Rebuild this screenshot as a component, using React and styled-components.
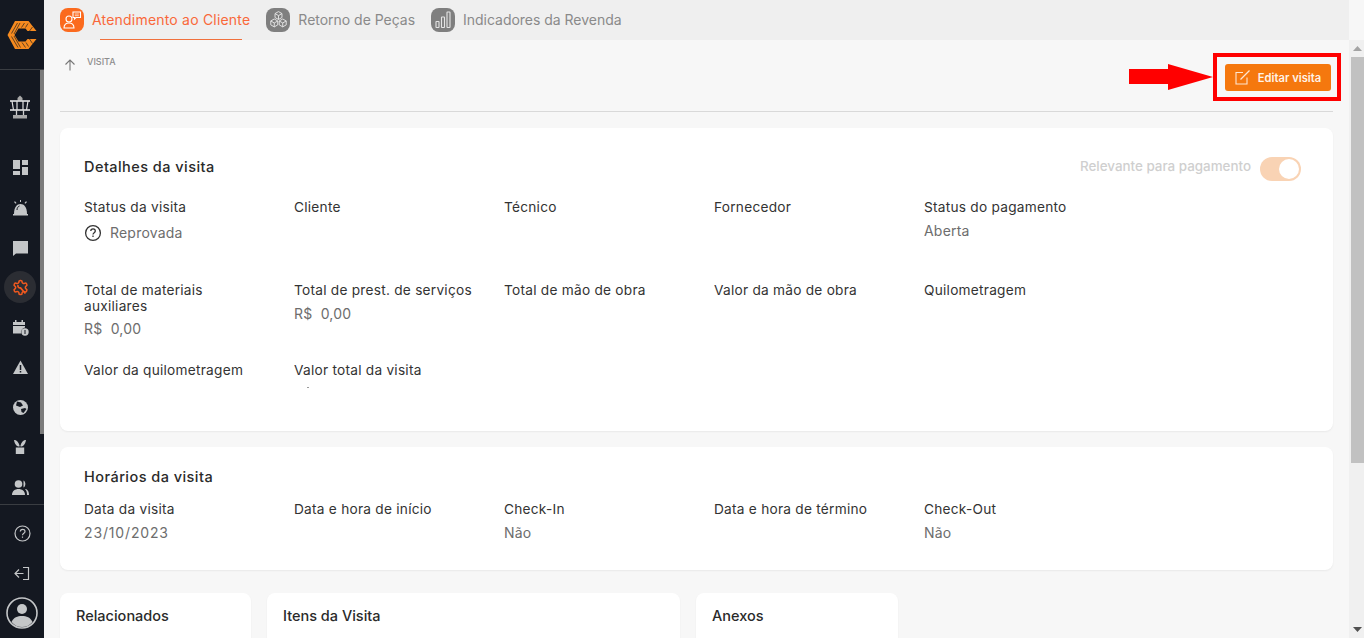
import React from "react";
import styled, { createGlobalStyle } from "styled-components";

const Global = createGlobalStyle`
  html, body { margin: 0; padding: 0; height: 100%; overflow: hidden; }
  body { font-family: Inter, "Noto Sans", sans-serif; }
  #root { height: 100%; }
`;

const Shell = styled.div`
  display: flex;
  width: 1364px;
  height: 638px;
  overflow: hidden;
  background: #f7f7f7;
`;

const Sidebar = styled.aside`
  width: 44px;
  flex: none;
  display: flex;
  flex-direction: column;
  background: #141821;
`;

const LogoBox = styled.div`
  height: 70px;
  flex: none;
  display: flex;
  align-items: center;
  justify-content: center;
  border-bottom: 1px solid #3a3d42;
  box-sizing: border-box;
`;

const NavScroll = styled.div`
  height: 435px;
  flex: none;
  display: flex;
  flex-direction: column;
  align-items: center;
  padding: 21px 4px 0 0;
  box-sizing: border-box;
  position: relative;
  border-bottom: 1px solid #3a3d42;
`;

const SideThumb = styled.div`
  position: absolute;
  top: 0;
  right: 0;
  width: 4px;
  height: 364px;
  background: #7b7b7b;
`;

const NavItem = styled.div`
  width: 32px;
  height: 32px;
  margin-bottom: ${p => p.$after ?? 8}px;
  flex: none;
  display: flex;
  align-items: center;
  justify-content: center;
  border-radius: 50%;
  background: ${p => (p.$active ? "#2b2d33" : "transparent")};
`;

const FootNav = styled.div`
  flex: 1;
  display: flex;
  flex-direction: column;
  align-items: center;
  padding-top: 12px;
  gap: 8px;
`;

const Main = styled.div`
  flex: 1;
  display: flex;
  min-width: 0;
`;

const Column = styled.div`
  flex: 1;
  min-width: 0;
  display: flex;
  flex-direction: column;
`;

const TabBar = styled.nav`
  height: 40px;
  flex: none;
  box-sizing: border-box;
  background: #efefef;
  display: flex;
  align-items: flex-start;
  padding-left: 16px;
`;

const Tab = styled.div`
  height: 40px;
  box-sizing: border-box;
  display: flex;
  align-items: center;
  gap: 8px;
  margin-right: 16px;
  padding-bottom: 1px;
  position: relative;
  font-size: 14px;
  letter-spacing: ${p => (p.$active ? "0.2px" : "-0.02px")};
  color: ${p => (p.$active ? "#f9683a" : "#8a8a8a")};
  ${p => p.$active && `
    &::after {
      content: "";
      position: absolute;
      left: 40px;
      bottom: 0;
      width: 142px;
      height: 1px;
      background: #f0703c;
    }
  `}
`;

const TabIcon = styled.span`
  width: 24px;
  height: 24px;
  border-radius: 8px;
  display: flex;
  align-items: center;
  justify-content: center;
  background: ${p => (p.$active ? "#fb6a1e" : "#7f7f7f")};
`;

const Content = styled.main`
  flex: 1;
  min-height: 0;
  padding: 0 16px;
  overflow: hidden;
`;

const PageHead = styled.header`
  height: 72px;
  box-sizing: border-box;
  border-bottom: 1px solid #d9d9d9;
  display: flex;
  justify-content: space-between;
  align-items: flex-start;
  margin-bottom: 16px;
`;

const Crumb = styled.div`
  display: flex;
  align-items: flex-start;
  gap: 11px;
  padding: 16px 0 0 4px;
  font-size: 9px;
  font-weight: 500;
  color: #8d8d8d;
  & > svg { margin-top: 3px; }
`;

const ActionArea = styled.div`
  display: flex;
  align-items: center;
  margin: 13px -8px 0 0;
`;

const Highlight = styled.div`
  width: 128px;
  height: 48px;
  box-sizing: border-box;
  border: 4px solid #ff0000;
  padding: 1px 6px 0 0;
  display: flex;
  align-items: center;
  justify-content: flex-end;
`;

const EditButton = styled.button`
  width: 106px;
  height: 27px;
  padding: 0;
  border: 0;
  border-radius: 3px;
  background: #f5780e;
  color: #fff3e8;
  font: 600 11.2px Inter, sans-serif;
  display: flex;
  align-items: center;
  justify-content: center;
  gap: 8px;
`;

const Card = styled.section`
  background: #fff;
  border-radius: 8px;
  box-shadow: 0 1px 2px rgba(0, 0, 0, 0.06);
  box-sizing: border-box;
  padding: ${p => p.$pad};
  height: ${p => p.$h}px;
  margin-bottom: 16px;
`;

const CardHead = styled.div`
  display: flex;
  justify-content: space-between;
  align-items: flex-start;
`;

const CardTitle = styled.h2`
  margin: 0;
  font-size: 14.5px;
  line-height: 20px;
  font-weight: 500;
  letter-spacing: ${p => (p.$wide ? "0.45px" : "0")};
  color: #2a2a2a;
`;

const RelevantRow = styled.div`
  display: flex;
  align-items: flex-start;
  gap: 9px;
  font-size: 13.4px;
  line-height: 18px;
  font-weight: 500;
  color: #cfcfcf;
  margin-right: 8px;
`;

const SwitchTrack = styled.span`
  width: 41px;
  height: 24px;
  border-radius: 12px;
  background: #f9d3b4;
  position: relative;
`;

const SwitchThumb = styled.span`
  position: absolute;
  top: 2px;
  right: 2px;
  width: 20px;
  height: 20px;
  border-radius: 50%;
  background: #fff;
`;

const FieldGrid = styled.div`
  display: grid;
  grid-template-columns: repeat(5, 210px);
  grid-template-rows: ${p => p.$rows};
  margin-top: ${p => p.$top}px;
`;

const Field = styled.div`
  padding-right: 26px;
  overflow: hidden;
`;

const Label = styled.div`
  font-size: 13.7px;
  line-height: 16px;
  letter-spacing: 0.24px;
  color: #333;
`;

const Value = styled.div`
  margin-top: ${p => p.$top ?? 7}px;
  font-size: 14px;
  line-height: 18px;
  letter-spacing: ${p => (p.$digits ? "0.85px" : "0.2px")};
  color: #6d6d6d;
  display: flex;
  align-items: center;
  gap: 8px;
`;

const ClippedValue = styled.div`
  height: 1px;
  margin: 9px 0 0 13px;
  width: 2px;
  background: #9a9a9a;
`;

const BottomRow = styled.div`
  display: flex;
  gap: 16px;
  margin-top: 23px;
`;

const SmallCard = styled.section`
  width: ${p => p.$w}px;
  height: 80px;
  background: #fff;
  border-radius: 8px;
  box-shadow: 0 1px 2px rgba(0, 0, 0, 0.06);
  padding: 13px 16px;
  box-sizing: border-box;
`;

const Scrollbar = styled.div`
  width: 15px;
  flex: none;
  background: #f0f0f0;
  display: flex;
  flex-direction: column;
  align-items: flex-end;
  margin-top: 40px;
`;

const ScrollArrow = styled.div`
  height: 17px;
  width: 13px;
  display: flex;
  align-items: center;
  justify-content: center;
  flex: none;
`;

const ScrollThumb = styled.div`
  width: 13px;
  height: 406px;
  background: #c1c1c1;
  flex: none;
`;

const ScrollSpace = styled.div`
  flex: 1;
`;

const Glyph = ({ children, size = 18, vb = 24 }) => (
  <svg width={size} height={size} viewBox={`0 0 ${vb} ${vb}`} fill="#c4c6c8">{children}</svg>
);

const Logo = () => (
  <svg width="30" height="30" viewBox="0 0 30 30" fill="none">
    <path d="M8 1h13.500L29.500 11H20.500L18.500 8.500H11.500L7.500 15l4 6.500h7l2-2.500h9l-8 10H8L.5 15z" fill="#f58a1f" />
    <path d="M4.500 13.500L10.500 3M7 14l6-11M14.500 7.500l3-4.500M18.500 7.500l2.500-4M22.500 11l3-4M4.500 16.500l6.500 11M7 16l6.500 11.500M15 22.500l3.500 5M19 22.500l2.500 4M22.500 19l3 4.500" stroke="#141821" strokeWidth=".65" />
  </svg>
);

const Tower = () => (
  <svg width="20" height="24" viewBox="0 0 20 24" fill="none">
    <path d="M7.500 5.500V3L10 .5 12.500 3v2.500z" fill="#a8a8a8" />
    <path d="M0 6h20M0 15h20" stroke="#f0f0f0" strokeWidth="1.600" />
    <path d="M2 6l1.500 9M7 6v9M13 6v9M18 6l-1.500 9" stroke="#e0e0e0" strokeWidth="1.200" />
    <path d="M6.500 15v5M13.500 15v5" stroke="#d0d0d0" strokeWidth="1.300" />
    <rect x="3" y="20" width="14" height="3.500" fill="#a8a8a8" />
  </svg>
);

const Dash = () => (
  <Glyph size={17} vb={17}>
    <path d="M1 1h7v9H1zM10 1h6v5h-6zM10 8h6v8h-6zM1 12h7v4H1z" />
  </Glyph>
);
const Alarm = () => (
  <Glyph size={17} vb={17}>
    <path d="M2 15c0-7 3-10 6.500-10S15 8 15 15z" />
    <path d="M1 15h15v1.500H1zM8 1h1v2H8zM2 3l1-.7L4.500 4l-.8.7zM15 3l-1-.7L12.500 4l.8.7z" />
    <path d="M5 11c0-2 1-3.500 2.500-4" stroke="#141821" strokeWidth="1" fill="none" />
  </Glyph>
);
const Chat = () => (
  <Glyph size={17} vb={17}>
    <path d="M1 2h15v12.500H4L1 17z" />
  </Glyph>
);
const Gear = () => (
  <svg width="17" height="17" viewBox="0 0 24 24" fill="none" stroke="#f0591f" strokeWidth="2.200" strokeLinejoin="round">
    <path d="M12.220 2h-.44a2 2 0 0 0-2 2v.18a2 2 0 0 1-1 1.730l-.43.250a2 2 0 0 1-2 0l-.15-.08a2 2 0 0 0-2.730.730l-.22.380a2 2 0 0 0 .730 2.730l.15.100a2 2 0 0 1 1 1.720v.510a2 2 0 0 1-1 1.740l-.15.090a2 2 0 0 0-.73 2.730l.22.380a2 2 0 0 0 2.730.730l.15-.08a2 2 0 0 1 2 0l.43.250a2 2 0 0 1 1 1.730V20a2 2 0 0 0 2 2h.44a2 2 0 0 0 2-2v-.18a2 2 0 0 1 1-1.730l.43-.25a2 2 0 0 1 2 0l.15.080a2 2 0 0 0 2.730-.73l.22-.39a2 2 0 0 0-.73-2.730l-.15-.08a2 2 0 0 1-1-1.740v-.5a2 2 0 0 1 1-1.740l.15-.09a2 2 0 0 0 .73-2.730l-.22-.38a2 2 0 0 0-2.730-.73l-.15.080a2 2 0 0 1-2 0l-.43-.25a2 2 0 0 1-1-1.730V4a2 2 0 0 0-2-2z" />
    <path d="M8.500 8.500a3 3 0 0 0 3.500 4l7 8" strokeWidth="2.400" />
  </svg>
);
const CalendarCost = () => (
  <Glyph size={17} vb={17}>
    <path d="M1 3h12v3H1zM3 1h1.500v2H3zM9.500 1H11v2H9.500zM1 7h12v1.500a5 5 0 0 0-4 6H1z" />
    <circle cx="13" cy="13" r="3.700" />
    <path d="M13 11v4" stroke="#141821" strokeWidth="1" />
  </Glyph>
);
const Warn = () => (
  <Glyph size={17} vb={17}>
    <path d="M8.500 1.500L16 15H1z" />
    <path d="M8.500 6v5M8.500 12v1.500" stroke="#141821" strokeWidth="1.500" />
  </Glyph>
);
const Globe = () => (
  <Glyph size={17} vb={17}>
    <circle cx="8.500" cy="8.500" r="7.500" />
    <path d="M5 2.500l4 1 2 3-3 1.500-4-1.500zM9 10l4-1 1.500 1-3 4-2-1z" fill="#141821" />
  </Glyph>
);
const Plant = () => (
  <Glyph size={14} vb={15}>
    <path d="M3 8h9v7H3zM1 0c3 0 5 2 6 6v1C4 7 2 5 1 0zM14 0c-3 0-5 2-6 6v1c3 0 5-2 6-7z" />
  </Glyph>
);
const People = () => (
  <Glyph size={17} vb={17}>
    <circle cx="6.500" cy="5" r="3.800" />
    <path d="M0 16c0-4 3-6 6.500-6s6.500 2 6.500 6z" />
    <path d="M11.500 1.500c2.500 1 2.500 6 0 7M14 10c2 1 3 3 3 6h-2c0-3-.5-4.500-2-5.500z" />
  </Glyph>
);
const Help = () => (
  <svg width="17" height="17" viewBox="0 0 17 17" fill="none" stroke="#c4c6c8" strokeWidth="1.200">
    <circle cx="8.500" cy="8.500" r="7.500" />
    <path d="M6.300 6.600c0-3 4.700-3 4.700-.2 0 1.900-2.500 1.800-2.500 3.900M8.500 11.500v1.300" />
  </svg>
);
const Leave = () => (
  <svg width="17" height="17" viewBox="0 0 17 17" fill="none" stroke="#c4c6c8" strokeWidth="1.200">
    <path d="M9 2.500h5.500v12H9M9.500 8.500H1.500M5 4.500l-4 4 4 4" />
  </svg>
);
const Avatar = () => (
  <svg width="32" height="32" viewBox="0 0 32 32" fill="none">
    <circle cx="16" cy="16" r="15" stroke="#c4c6c8" strokeWidth="1.600" />
    <circle cx="16" cy="12" r="5" fill="#c4c6c8" />
    <path d="M5.500 25c2-4.500 6-6 10.500-6s8.500 1.500 10.500 6c-2.500 3-6 5-10.500 5s-8-2-10.500-5z" fill="#c4c6c8" />
  </svg>
);

const SupportIcon = () => (
  <svg width="20" height="20" viewBox="0 0 20 20" fill="none" stroke="#fff" strokeWidth="1.100">
    <circle cx="7" cy="9" r="3" />
    <path d="M2 18c0-3.500 2.200-5 5-5s5 1.500 5 5z" />
    <path d="M11 2h7.500v5.500h-4.500l-1.500 1.500V7.500H11z" />
    <path d="M12.800 4h4M12.800 5.700h4" strokeWidth=".7" />
  </svg>
);
const PartsIcon = () => (
  <svg width="19" height="19" viewBox="0 0 18 18" fill="none" stroke="#e5e5e5" strokeWidth=".9">
    <path d="M9 1.500l3.300 1.900v3.700L9 9 5.700 7.100V3.400zM5.700 3.400L9 5.300l3.300-1.900M9 5.300V9" />
    <path d="M5 8.500l3.300 1.900v3.700L5 16l-3.300-1.900v-3.700zM1.700 10.400L5 12.300l3.300-1.900M5 12.300V16" />
    <path d="M13 8.500l3.300 1.900v3.700L13 16l-3.300-1.900v-3.700zM9.700 10.400l3.300 1.900 3.300-1.900M13 12.300V16" />
  </svg>
);
const BarsIcon = () => (
  <svg width="20" height="20" viewBox="0 0 20 20" fill="none" stroke="#e5e5e5" strokeWidth="1.100">
    <rect x="3" y="11.500" width="3" height="6" rx=".5" />
    <rect x="8.500" y="7" width="3" height="10.500" rx=".5" />
    <rect x="14" y="2" width="3" height="15.500" rx=".5" />
  </svg>
);
const UpArrow = () => (
  <svg width="12" height="12" viewBox="0 0 12 12" fill="none" stroke="#777" strokeWidth="1.100">
    <path d="M6 11.500V1M1.500 5.500L6 1l4.500 4.500" />
  </svg>
);
const EditIcon = () => (
  <svg width="15" height="15" viewBox="0 0 15 15" fill="none" stroke="#fde6d2" strokeWidth="1.100">
    <path d="M8 2.500H1v11.500h11V7.500" />
    <path d="M5.500 9.500L14.500 .5" strokeWidth="1.300" />
  </svg>
);
const RedArrow = () => (
  <svg width="84" height="26" viewBox="0 0 84 26">
    <path d="M0 5h39V0l45 13-45 13v-6H0z" fill="#ff0000" />
  </svg>
);
const Question = () => (
  <svg width="18" height="18" viewBox="0 0 18 18" fill="none" stroke="#333" strokeWidth="1.300">
    <circle cx="9" cy="9" r="7.400" />
    <path d="M6.800 7c0-2.800 4.500-2.800 4.500-.1 0 1.800-2.300 1.700-2.300 3.600M9 11.600v1.400" />
  </svg>
);

const SIDE_ICONS = [Dash, Alarm, Chat, Gear, CalendarCost, Warn, Globe, Plant, People];

const detailRows = [
  { label: "Status da visita", icon: true, value: "Reprovada", top: 9 },
  { label: "Cliente" },
  { label: "Técnico" },
  { label: "Fornecedor" },
  { label: "Status do pagamento", value: "Aberta" },
  { label: "Total de materiais auxiliares", value: "R$\u00a0\u00a00,00", top: 6 },
  { label: "Total de prest. de serviços", value: "R$\u00a0\u00a00,00", top: 7 },
  { label: "Total de mão de obra" },
  { label: "Valor da mão de obra" },
  { label: "Quilometragem" },
  { label: "Valor da quilometragem" },
  { label: "Valor total da visita", clipped: true },
];

const timeRows = [
  { label: "Data da visita", value: "23/10/2023", digits: true },
  { label: "Data e hora de início" },
  { label: "Check-In", value: "Não" },
  { label: "Data e hora de término" },
  { label: "Check-Out", value: "Não" },
];

const Cell = ({ f }) => (
  <Field>
    <Label>{f.label}</Label>
    {f.value && (
      <Value $top={f.top} $digits={f.digits}>
        {f.icon && <Question />}
        {f.value}
      </Value>
    )}
    {f.clipped && <ClippedValue />}
  </Field>
);

export default function App() {
  return (
    <>
      <Global />
      <Shell>
        <Sidebar>
          <LogoBox><Logo /></LogoBox>
          <NavScroll>
            <SideThumb />
            <NavItem $after={28}><Tower /></NavItem>
            {SIDE_ICONS.map((I, i) => (
              <NavItem key={i} $active={i === 3}><I /></NavItem>
            ))}
          </NavScroll>
          <FootNav>
            <NavItem $after={0}><Help /></NavItem>
            <NavItem $after={0}><Leave /></NavItem>
            <Avatar />
          </FootNav>
        </Sidebar>
        <Main>
          <Column>
            <TabBar>
              <Tab $active><TabIcon $active><SupportIcon /></TabIcon>Atendimento ao Cliente</Tab>
              <Tab><TabIcon><PartsIcon /></TabIcon>Retorno de Peças</Tab>
              <Tab><TabIcon><BarsIcon /></TabIcon>Indicadores da Revenda</Tab>
            </TabBar>
            <Content>
              <PageHead>
                <Crumb><UpArrow />VISITA</Crumb>
                <ActionArea>
                  <RedArrow />
                  <Highlight>
                    <EditButton><EditIcon />Editar visita</EditButton>
                  </Highlight>
                </ActionArea>
              </PageHead>
              <Card $h={303} $pad="29px 24px 0">
                <CardHead>
                  <CardTitle $wide>Detalhes da visita</CardTitle>
                  <RelevantRow>
                    Relevante para pagamento
                    <SwitchTrack><SwitchThumb /></SwitchTrack>
                  </RelevantRow>
                </CardHead>
                <FieldGrid $rows="83px 80px 60px" $top={18}>
                  {detailRows.map(f => <Cell key={f.label} f={f} />)}
                </FieldGrid>
              </Card>
              <Card $h={123} $pad="20px 24px 0">
                <CardTitle $wide>Horários da visita</CardTitle>
                <FieldGrid $rows="60px" $top={14}>
                  {timeRows.map(f => <Cell key={f.label} f={f} />)}
                </FieldGrid>
              </Card>
              <BottomRow>
                <SmallCard $w={191}><CardTitle>Relacionados</CardTitle></SmallCard>
                <SmallCard $w={413}><CardTitle>Itens da Visita</CardTitle></SmallCard>
                <SmallCard $w={202}><CardTitle>Anexos</CardTitle></SmallCard>
              </BottomRow>
            </Content>
          </Column>
          <Scrollbar>
            <ScrollArrow>
              <svg width="9" height="5" viewBox="0 0 9 5"><path d="M4.500 0L9 5H0z" fill="#a3a3a3" /></svg>
            </ScrollArrow>
            <ScrollThumb />
            <ScrollSpace />
            <ScrollArrow>
              <svg width="9" height="5" viewBox="0 0 9 5"><path d="M0 0h9L4.500 5z" fill="#505050" /></svg>
            </ScrollArrow>
          </Scrollbar>
        </Main>
      </Shell>
    </>
  );
}
